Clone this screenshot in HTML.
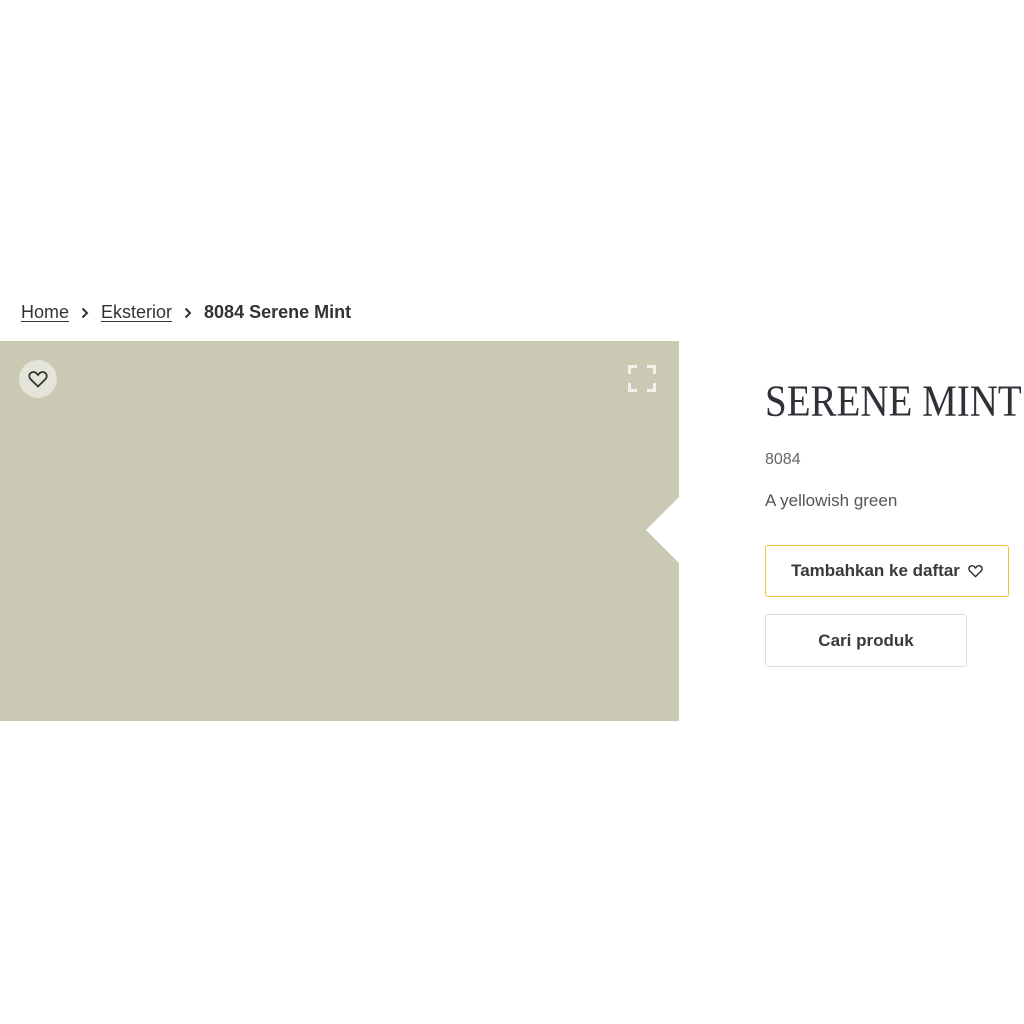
<!DOCTYPE html>
<html><head><style>
body{margin:0;width:1024px;height:1024px;background:#fff;font-family:"Liberation Sans",sans-serif;color:#333;position:relative;overflow:hidden}
.a{position:absolute}
.bc{top:302px;left:21px;font-size:18px;white-space:nowrap;color:#333;display:flex;align-items:center}
.bc u{text-underline-offset:3px}
.chev{margin:0 12px;width:8px;height:12px}
.btn{position:absolute;box-sizing:border-box;border-radius:3px;background:#fff;font-weight:bold;font-size:17px;color:#3a3a3a;display:flex;align-items:center;justify-content:center}
</style></head><body>
<div class="a bc"><u>Home</u><svg class="chev" viewBox="0 0 8 12"><path d="M1.5 1.5L6 6L1.5 10.5" fill="none" stroke="#333" stroke-width="2"/></svg><u>Eksterior</u><svg class="chev" viewBox="0 0 8 12"><path d="M1.5 1.5L6 6L1.5 10.5" fill="none" stroke="#333" stroke-width="2"/></svg><b>8084 Serene Mint</b></div>
<div class="a" style="left:0;top:341px;width:679px;height:380px;background:#cac9b4"></div>
<svg class="a" style="left:645px;top:496px" width="35" height="68"><polygon points="35,0 1,34 35,68" fill="#fff"/></svg>
<div class="a" style="left:19px;top:360px;width:38px;height:38px;border-radius:50%;background:#e5e4d9"></div>
<svg class="a" style="left:28px;top:370px" width="20" height="18" viewBox="0 0 20 18"><path d="M10 16.5L2.6 9.2C0.6 7.2 0.9 4 3.2 2.6C5.2 1.4 7.7 2 9 3.8L10 5L11 3.8C12.3 2 14.8 1.4 16.8 2.6C19.1 4 19.4 7.2 17.4 9.2Z" fill="none" stroke="#333" stroke-width="1.8"/></svg>
<svg class="a" style="left:628px;top:365px" width="28" height="27" viewBox="0 0 28 27"><path d="M1.5 9V1.5H9M19 1.5H26.5V9M26.5 18V25.5H19M9 25.5H1.5V18" fill="none" stroke="#f2f1ea" stroke-width="3"/></svg>
<div class="a" style="left:765px;top:375px;font-family:'Liberation Serif',serif;font-size:39px;color:#2f3038;white-space:nowrap;transform:scaleY(1.15);transform-origin:left top">SERENE MINT</div>
<div class="a" style="left:765px;top:451px;font-size:16px;color:#666">8084</div>
<div class="a" style="left:765px;top:491px;font-size:17px;color:#555">A yellowish green</div>
<div class="btn" style="left:765px;top:545px;width:244px;height:52px;border:1px solid #f4c33e">Tambahkan ke daftar<svg style="margin-left:8px" width="15" height="14" viewBox="0 0 20 18"><path d="M10 16.5L2.6 9.2C0.6 7.2 0.9 4 3.2 2.6C5.2 1.4 7.7 2 9 3.8L10 5L11 3.8C12.3 2 14.8 1.4 16.8 2.6C19.1 4 19.4 7.2 17.4 9.2Z" fill="none" stroke="#333" stroke-width="2"/></svg></div>
<div class="btn" style="left:765px;top:614px;width:202px;height:53px;border:1px solid #ddd">Cari produk</div>
</body></html>
